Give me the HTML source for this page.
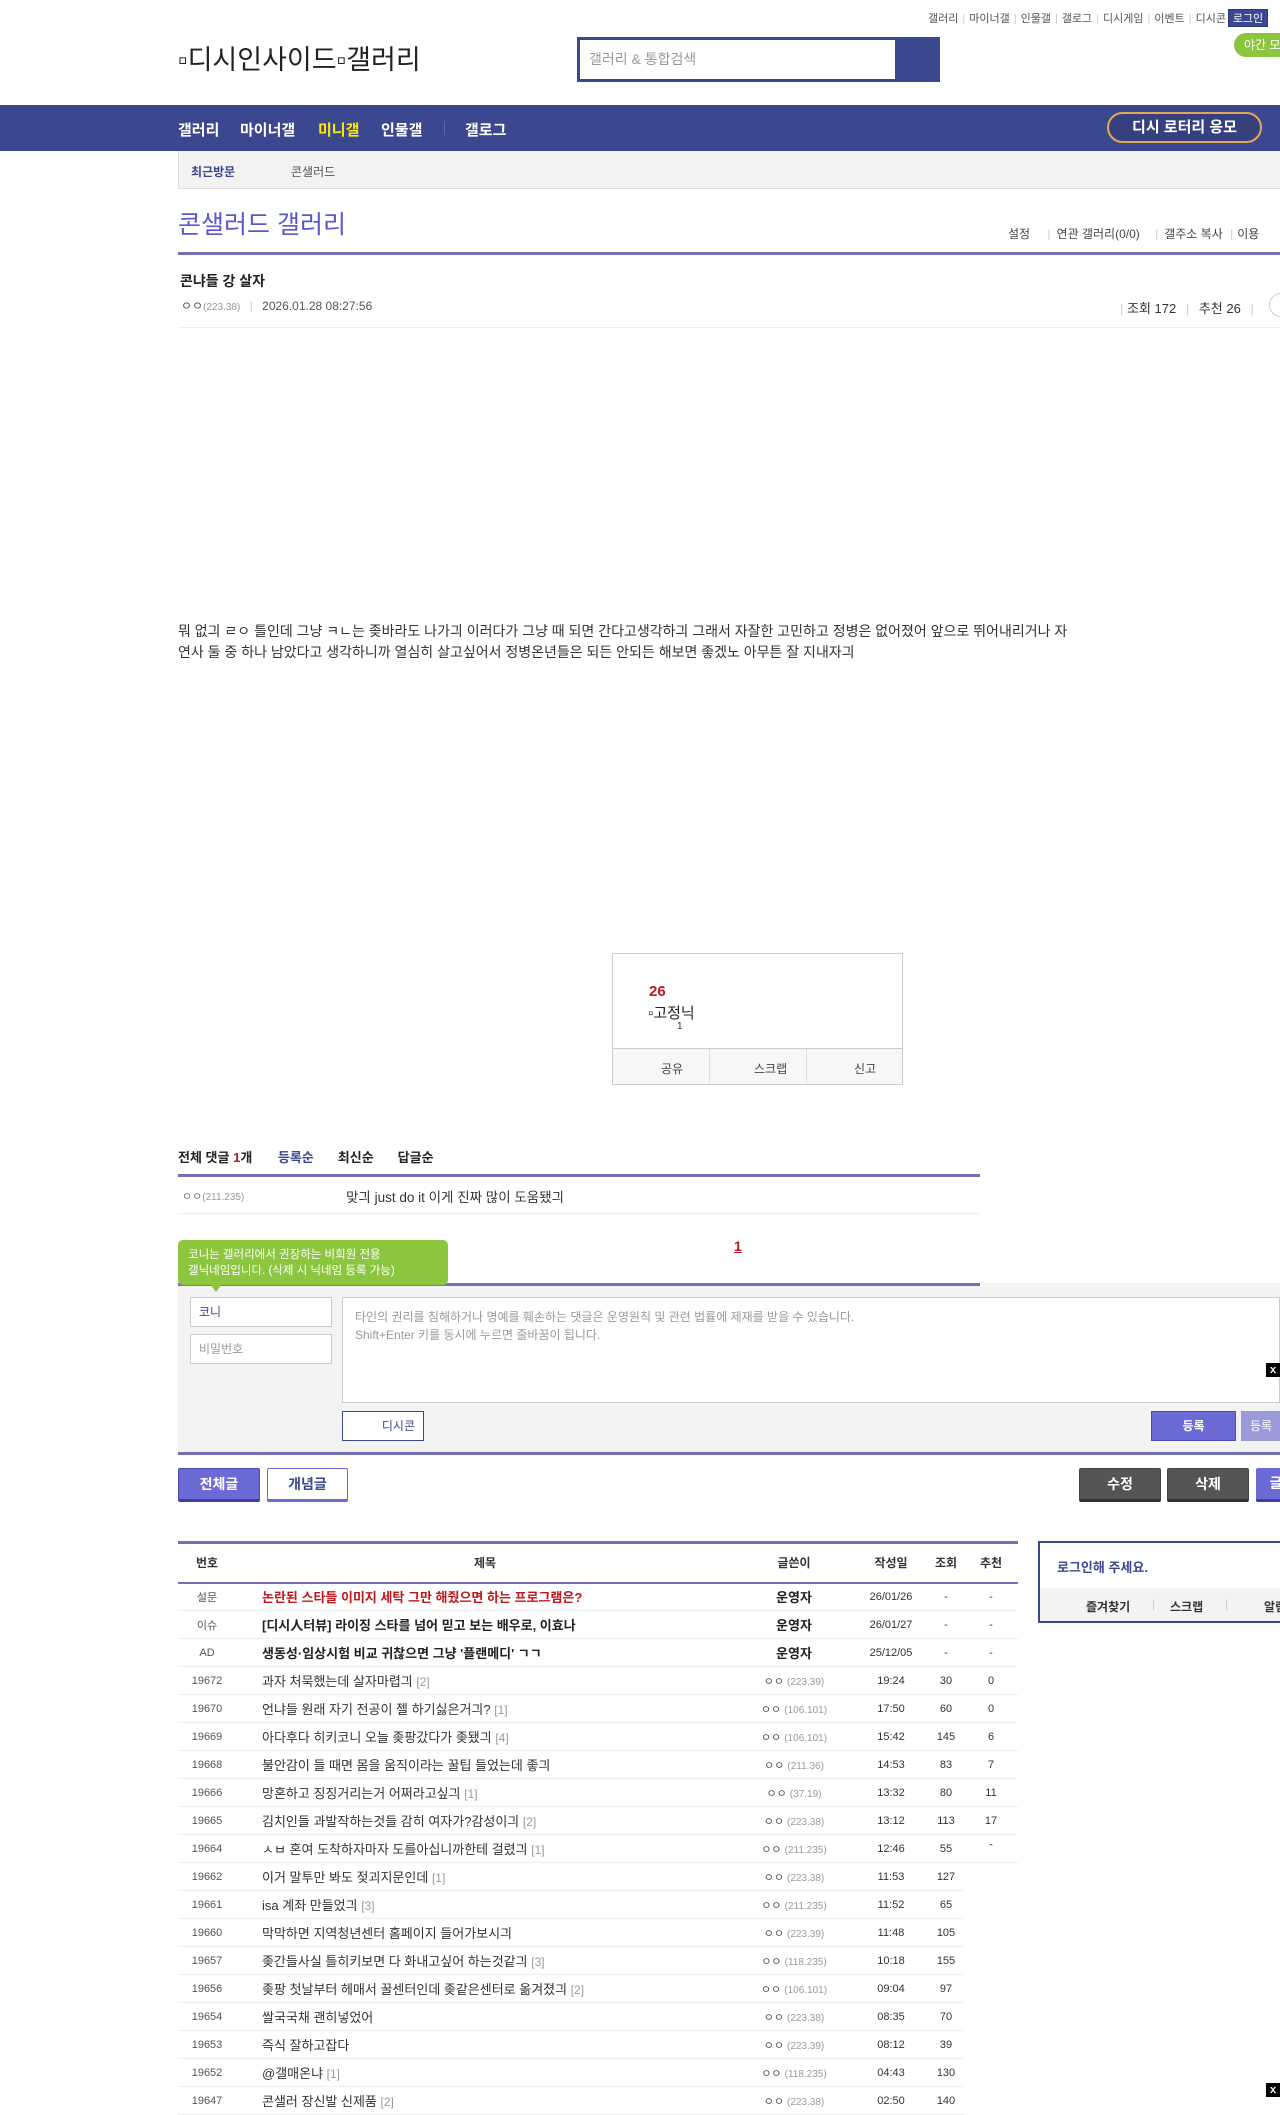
<!DOCTYPE html>
<html><head><meta charset="utf-8">
<style>
*{margin:0;padding:0;box-sizing:border-box}
body{width:1280px;height:2098px;overflow:hidden;position:relative;background:#fff;font-family:"Liberation Sans","Noto Sans CJK KR",sans-serif;color:#333;font-size:12px}
.a{position:absolute;white-space:nowrap}
.util{top:10px;right:54px;font-size:11px;color:#555}
.util span{color:#ccc;margin:0 4px}
.login{left:1228px;top:9px;width:40px;height:18px;background:#3b4890;color:#fff;font-size:11px;text-align:center;line-height:18px;border:1px solid #29367a}
.night{left:1234px;top:33px;width:60px;height:24px;border-radius:12px 0 0 12px;background:#8cc63f;color:#fff;font-size:12px;line-height:24px;padding-left:10px}
.search{left:577px;top:37px;width:363px;height:45px;background:#3b4890}
.search div{position:absolute;left:3px;top:3px;width:315px;height:39px;background:#fff;color:#999;font-size:14px;line-height:39px;padding-left:9px}
.nav{left:0;top:105px;width:1280px;height:46px;background:#3b4890}
.nav b{position:absolute;top:14px;color:#fff;font-size:15px}
.lotto{left:1107px;top:112px;width:155px;height:31px;border:2px solid #e3a857;border-radius:16px;color:#fff;font-size:15px;font-weight:bold;text-align:center;line-height:27px;background:#36407f}
.recent{left:178px;top:151px;width:1102px;height:38px;background:#f3f3f3;border-left:1px solid #ddd;border-bottom:1px solid #ddd}
.line{background:#7470b3;height:3px}
td,th{font-size:12px}
.tbl{left:178px;top:1541px;width:840px;border-collapse:collapse;table-layout:fixed}
.tbl th{height:40px;border-top:3px solid #7470b3;border-bottom:2px solid #7470b3;font-weight:bold;color:#333}
.tbl td{height:28px;border-bottom:1px solid #eee;color:#333}
.tbl td.n{text-align:center;font-size:11px;color:#555}
.tbl td.w{text-align:center;font-size:11px;color:#555}
.tbl td.w i{font-style:normal;color:#999;font-size:10px}
.tbl td.d,.tbl td.v,.tbl td.r{text-align:center;font-size:11px}
.tbl td.t{font-size:13px;padding-left:26px;overflow:hidden;white-space:nowrap}
.tbl td.t i{font-style:normal;color:#999;font-size:12px}
.btn{height:34px;font-size:14px;font-weight:bold;text-align:center;line-height:30px;border-radius:2px}
.xx{width:14px;height:14px;background:#000;color:#fff;font-size:11px;font-weight:bold;text-align:center;line-height:14px}
</style></head><body>
<div class="a util">갤러리<span>|</span>마이너갤<span>|</span>인물갤<span>|</span>갤로그<span>|</span>디시게임<span>|</span>이벤트<span>|</span>디시콘</div>
<div class="a login">로그인</div>
<div class="a night">야간 모드</div>
<div class="a" style="left:178px;top:38px;font-size:27px;color:#222">▫디시인사이드▫갤러리</div>
<div class="a search"><div>갤러리 &amp; 통합검색</div></div>
<div class="a nav">
<b style="left:178px">갤러리</b><b style="left:240px">마이너갤</b><b style="left:318px;color:#ffea00">미니갤</b><b style="left:381px">인물갤</b>
<span style="position:absolute;left:444px;top:16px;width:1px;height:14px;background:#5c68a8"></span>
<b style="left:465px">갤로그</b></div>
<div class="a lotto">디시 로터리 응모</div>
<div class="a recent"><span class="a" style="left:12px;top:12px;font-size:12px;color:#3b4890;font-weight:bold">최근방문</span><span class="a" style="left:112px;top:12px;font-size:12px;color:#555">콘샐러드</span></div>
<div class="a" style="left:178px;top:205px;font-size:25px;color:#5b59c9">콘샐러드 갤러리</div>
<div class="a" style="left:1008px;top:225px;font-size:12px;color:#444">설정 <span style="color:#ccc;margin:0 6px 0 14px">|</span>연관 갤러리(0/0) <span style="color:#ccc;margin:0 6px 0 12px">|</span>갤주소 복사 <span style="color:#ccc;margin:0 4px">|</span>이용</div>
<div class="a line" style="left:178px;top:252px;width:1102px"></div>
<div class="a" style="left:180px;top:271px;font-size:14px;font-weight:bold;color:#222">콘냐들 강 살자</div>
<div class="a" style="left:181px;top:297px;font-size:12px;color:#555">ㅇㅇ<span style="font-size:10px;color:#999">(223.38)</span> <span style="color:#ccc;margin:0 6px">|</span> 2026.01.28 08:27:56</div>
<div class="a" style="left:1120px;top:298px;font-size:13px;color:#333"><span style="color:#ccc">|</span> 조회 172 <span style="color:#ccc;margin:0 6px">|</span> 추천 26 <span style="color:#ccc;margin:0 6px">|</span></div>
<div class="a" style="left:1269px;top:293px;width:24px;height:24px;border:1px solid #ccc;border-radius:12px"></div>
<div class="a" style="left:178px;top:327px;width:1102px;height:1px;background:#eee"></div>
<div class="a" style="left:178px;top:621px;font-size:14px;line-height:21px;color:#333">뭐 없긔 ㄹㅇ 틀인데 그냥 ㅋㄴ는 좆바라도 나가긔 이러다가 그냥 때 되면 간다고생각하긔 그래서 자잘한 고민하고 정병은 없어졌어 앞으로 뛰어내리거나 자<br>연사 둘 중 하나 남았다고 생각하니까 열심히 살고싶어서 정병온년들은 되든 안되든 해보면 좋겠노 아무튼 잘 지내자긔</div>

<div class="a" style="left:612px;top:953px;width:291px;height:132px;border:1px solid #ccc"></div>
<div class="a" style="left:649px;top:983px;font-size:15px;font-weight:bold;color:#c0161b">26</div>
<div class="a" style="left:648px;top:1002px;font-size:15px;color:#222">▫고정닉</div>
<div class="a" style="left:677px;top:1021px;font-size:10px;color:#333">1</div>
<div class="a" style="left:613px;top:1048px;width:289px;height:36px;background:#f7f7f7;border-top:1px solid #ccc;font-size:12px;color:#444">
<span class="a" style="left:48px;top:11px">공유</span><span class="a" style="left:96px;top:0;width:1px;height:36px;background:#ddd"></span>
<span class="a" style="left:141px;top:11px">스크랩</span><span class="a" style="left:193px;top:0;width:1px;height:36px;background:#ddd"></span>
<span class="a" style="left:241px;top:11px">신고</span></div>

<div class="a" style="left:178px;top:1147px;font-size:13px;font-weight:bold;color:#222">전체 댓글 <span style="color:#c0161b">1</span>개 <span style="color:#3b4890;margin-left:22px">등록순</span><span style="margin-left:24px">최신순</span><span style="margin-left:24px">답글순</span></div>
<div class="a line" style="left:178px;top:1174px;width:802px"></div>
<div class="a" style="left:182px;top:1188px;font-size:11px;color:#777">ㅇㅇ<span style="font-size:10px;color:#999">(211.235)</span></div>
<div class="a" style="left:346px;top:1186px;font-size:13.5px;color:#333">맞긔 just do it 이게 진짜 많이 도움됐긔</div>
<div class="a" style="left:178px;top:1213px;width:802px;height:1px;background:#eee"></div>
<div class="a" style="left:734px;top:1238px;font-size:14px;font-weight:bold;color:#c0161b;text-decoration:underline">1</div>
<div class="a" style="left:178px;top:1283px;width:1102px;height:170px;background:#f3f3f3"></div>
<div class="a line" style="left:178px;top:1283px;width:802px"></div>
<div class="a" style="left:178px;top:1240px;width:270px;height:45px;background:#8cc63f;border-radius:5px;color:#fff;font-size:11.5px;line-height:16px;padding:7px 10px">코니는 갤러리에서 권장하는 비회원 전용<br>갤닉네임입니다. (삭제 시 닉네임 등록 가능)</div>
<div class="a" style="left:210px;top:1284px;width:0;height:0;border-left:6px solid transparent;border-right:6px solid transparent;border-top:8px solid #8cc63f"></div>
<div class="a" style="left:190px;top:1297px;width:142px;height:30px;background:#fff;border:1px solid #ccc;font-size:12px;color:#3b4890;line-height:28px;padding-left:8px">코니</div>
<div class="a" style="left:190px;top:1334px;width:142px;height:30px;background:#fff;border:1px solid #ccc;font-size:12px;color:#999;line-height:28px;padding-left:8px">비밀번호</div>
<div class="a" style="left:342px;top:1297px;width:938px;height:106px;background:#fff;border:1px solid #ccc;font-size:12px;color:#999;line-height:18px;padding:10px 12px">타인의 권리를 침해하거나 명예를 훼손하는 댓글은 운영원칙 및 관련 법률에 제재를 받을 수 있습니다.<br>Shift+Enter 키를 동시에 누르면 줄바꿈이 됩니다.</div>
<div class="a" style="left:342px;top:1411px;width:82px;height:30px;background:#fff;border:1px solid #3b4890;font-size:12px;color:#3b4890;line-height:28px;text-align:right;padding-right:8px">디시콘</div>
<div class="a" style="left:1151px;top:1411px;width:85px;height:30px;background:#6c6bd6;border:1px solid #4b4ab5;color:#fff;font-size:12px;font-weight:bold;text-align:center;line-height:28px">등록</div>
<div class="a" style="left:1241px;top:1411px;width:50px;height:30px;background:#9b9ad8;color:#fff;font-size:12px;text-align:center;line-height:30px;padding-right:10px">등록</div>
<div class="a xx" style="left:1266px;top:1363px">x</div>
<div class="a line" style="left:178px;top:1452px;width:1102px"></div>
<div class="a btn" style="left:178px;top:1468px;width:82px;background:#6c6bd6;border:1px solid #4b4ab5;border-bottom:3px solid #3f3ea8;color:#fff">전체글</div>
<div class="a btn" style="left:267px;top:1468px;width:81px;background:#fff;border:1px solid #6c6bd6;border-bottom:3px solid #6c6bd6;color:#3b4890">개념글</div>
<div class="a btn" style="left:1079px;top:1468px;width:82px;background:#555;border:1px solid #444;border-bottom:3px solid #333;color:#fff">수정</div>
<div class="a btn" style="left:1167px;top:1468px;width:82px;background:#555;border:1px solid #444;border-bottom:3px solid #333;color:#fff">삭제</div>
<div class="a btn" style="left:1256px;top:1468px;width:40px;background:#6c6bd6;border-bottom:3px solid #3f3ea8;color:#fff">글</div>

<table class="a tbl">
<colgroup><col style="width:58px"><col style="width:498px"><col style="width:120px"><col style="width:74px"><col style="width:36px"><col style="width:54px"></colgroup>
<tr><th>번호</th><th>제목</th><th>글쓴이</th><th>작성일</th><th>조회</th><th>추천</th></tr>
<tr><td class="n">설문</td><td class="t" style="color:#c0161b;font-weight:bold">논란된 스타들 이미지 세탁 그만 해줬으면 하는 프로그램은?</td><td class="w" style="font-size:13px;font-weight:bold;color:#222">운영자</td><td class="d">26/01/26</td><td class="v">-</td><td class="r">-</td></tr>
<tr><td class="n">이슈</td><td class="t" style="font-weight:bold;color:#222">[디시人터뷰] 라이징 스타를 넘어 믿고 보는 배우로, 이효나</td><td class="w" style="font-size:13px;font-weight:bold;color:#222">운영자</td><td class="d">26/01/27</td><td class="v">-</td><td class="r">-</td></tr>
<tr><td class="n">AD</td><td class="t" style="font-weight:bold;color:#222">생동성·임상시험 비교 귀찮으면 그냥 '플랜메디' ㄱㄱ</td><td class="w" style="font-size:13px;font-weight:bold;color:#222">운영자</td><td class="d">25/12/05</td><td class="v">-</td><td class="r">-</td></tr>
<tr><td class="n">19672</td><td class="t">과자 처묵했는데 살자마렵긔 <i>[2]</i></td><td class="w">ㅇㅇ <i>(223.39)</i></td><td class="d">19:24</td><td class="v">30</td><td class="r">0</td></tr>
<tr><td class="n">19670</td><td class="t">언냐들 원래 자기 전공이 젤 하기싫은거긔? <i>[1]</i></td><td class="w">ㅇㅇ <i>(106.101)</i></td><td class="d">17:50</td><td class="v">60</td><td class="r">0</td></tr>
<tr><td class="n">19669</td><td class="t">아다후다 히키코니 오늘 좆팡갔다가 좆됐긔 <i>[4]</i></td><td class="w">ㅇㅇ <i>(106.101)</i></td><td class="d">15:42</td><td class="v">145</td><td class="r">6</td></tr>
<tr><td class="n">19668</td><td class="t">불안감이 들 때면 몸을 움직이라는 꿀팁 들었는데 좋긔</td><td class="w">ㅇㅇ <i>(211.36)</i></td><td class="d">14:53</td><td class="v">83</td><td class="r">7</td></tr>
<tr><td class="n">19666</td><td class="t">망혼하고 징징거리는거 어쩌라고싶긔 <i>[1]</i></td><td class="w">ㅇㅇ <i>(37.19)</i></td><td class="d">13:32</td><td class="v">80</td><td class="r">11</td></tr>
<tr><td class="n">19665</td><td class="t">김치인들 과발작하는것들 감히 여자가?감성이긔 <i>[2]</i></td><td class="w">ㅇㅇ <i>(223.38)</i></td><td class="d">13:12</td><td class="v">113</td><td class="r">17</td></tr>
<tr><td class="n">19664</td><td class="t">ㅅㅂ 혼여 도착하자마자 도를아십니까한테 걸렸긔 <i>[1]</i></td><td class="w">ㅇㅇ <i>(211.235)</i></td><td class="d">12:46</td><td class="v">55</td><td class="r">ˆ</td></tr>
<tr><td class="n">19662</td><td class="t">이거 말투만 봐도 젖괴지문인데 <i>[1]</i></td><td class="w">ㅇㅇ <i>(223.38)</i></td><td class="d">11:53</td><td class="v">127</td><td class="r" style="border-bottom:none"></td></tr>
<tr><td class="n">19661</td><td class="t">isa 계좌 만들었긔 <i>[3]</i></td><td class="w">ㅇㅇ <i>(211.235)</i></td><td class="d">11:52</td><td class="v">65</td><td class="r" style="border-bottom:none"></td></tr>
<tr><td class="n">19660</td><td class="t">막막하면 지역청년센터 홈페이지 들어가보시긔</td><td class="w">ㅇㅇ <i>(223.39)</i></td><td class="d">11:48</td><td class="v">105</td><td class="r" style="border-bottom:none"></td></tr>
<tr><td class="n">19657</td><td class="t">좆간들사실 틀히키보면 다 화내고싶어 하는것같긔 <i>[3]</i></td><td class="w">ㅇㅇ <i>(118.235)</i></td><td class="d">10:18</td><td class="v">155</td><td class="r" style="border-bottom:none"></td></tr>
<tr><td class="n">19656</td><td class="t">좆팡 첫날부터 헤매서 꿀센터인데 좆같은센터로 옮겨졌긔 <i>[2]</i></td><td class="w">ㅇㅇ <i>(106.101)</i></td><td class="d">09:04</td><td class="v">97</td><td class="r" style="border-bottom:none"></td></tr>
<tr><td class="n">19654</td><td class="t">쌀국국채 괜히넣었어</td><td class="w">ㅇㅇ <i>(223.38)</i></td><td class="d">08:35</td><td class="v">70</td><td class="r" style="border-bottom:none"></td></tr>
<tr><td class="n">19653</td><td class="t">즉식 잘하고잡다</td><td class="w">ㅇㅇ <i>(223.39)</i></td><td class="d">08:12</td><td class="v">39</td><td class="r" style="border-bottom:none"></td></tr>
<tr><td class="n">19652</td><td class="t">@갤매온냐 <i>[1]</i></td><td class="w">ㅇㅇ <i>(118.235)</i></td><td class="d">04:43</td><td class="v">130</td><td class="r" style="border-bottom:none"></td></tr>
<tr><td class="n">19647</td><td class="t">콘샐러 장신발 신제품 <i>[2]</i></td><td class="w">ㅇㅇ <i>(223.38)</i></td><td class="d">02:50</td><td class="v">140</td><td class="r" style="border-bottom:none"></td></tr>
</table>
<div class="a" style="left:1038px;top:1541px;width:250px;height:82px;border:2px solid #3b4890;border-right:none"></div>
<div class="a" style="left:1057px;top:1557px;font-size:13px;font-weight:bold;color:#3b4890">로그인해 주세요.</div>
<div class="a" style="left:1040px;top:1588px;width:240px;height:33px;background:#f3f3f3;font-size:12px;color:#333;font-weight:bold">
<span class="a" style="left:46px;top:10px">즐겨찾기</span><span class="a" style="left:112px;top:9px;color:#ccc;font-weight:normal">|</span>
<span class="a" style="left:130px;top:10px">스크랩</span><span class="a" style="left:185px;top:9px;color:#ccc;font-weight:normal">|</span>
<span class="a" style="left:224px;top:10px">알림</span></div>
<div class="a xx" style="left:1266px;top:2083px">x</div>
</body></html>
